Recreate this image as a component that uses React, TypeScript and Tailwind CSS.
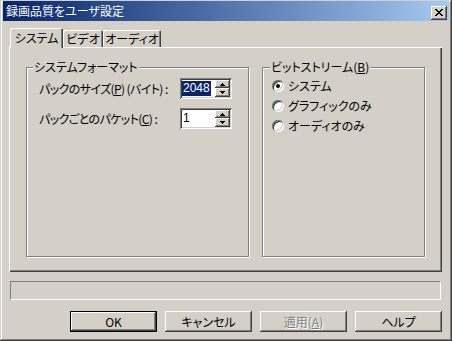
import React from 'react';

const raised =
  'shadow-[inset_-1px_-1px_#404040,inset_1px_1px_#ffffff,inset_-2px_-2px_#808080,inset_2px_2px_#d4d0c8]';
const sunken =
  'shadow-[inset_1px_1px_#808080,inset_-1px_-1px_#ffffff,inset_2px_2px_#404040,inset_-2px_-2px_#d4d0c8]';
const etched = 'border border-[#808080] shadow-[inset_1px_1px_#ffffff,1px_1px_#ffffff]';

function SpinBox({ value, selected }: { value: string; selected?: boolean }) {
  return (
    <div className={`w-[52px] h-[21px] bg-white flex p-[2px] ${sunken}`}>
      <div className="flex-1 flex items-center pl-0">
        <span
          className={`leading-[15px] h-[15px] text-[12px] font-['Liberation_Sans',sans-serif] px-[1px] ${
            selected ? 'bg-[#0a246a] text-white' : 'text-black'
          }`}
        >
          {value}
        </span>
      </div>
      <div className="w-[15px] flex flex-col">
        <div className={`h-[8px] bg-[#d4d0c8] flex items-center justify-center ${raised}`}>
          <svg width="5" height="3" viewBox="0 0 5 3">
            <path d="M2 0h1v1h1v1h1v1H0V2h1V1h1z" fill="#000" />
          </svg>
        </div>
        <div className={`h-[9px] bg-[#d4d0c8] flex items-center justify-center ${raised}`}>
          <svg width="5" height="3" viewBox="0 0 5 3">
            <path d="M0 0h5v1H4v1H3v1H2V2H1V1H0z" fill="#000" />
          </svg>
        </div>
      </div>
    </div>
  );
}

function Radio({ checked, label }: { checked?: boolean; label: string }) {
  return (
    <div className="h-[20px] flex items-center">
      <div className="w-[12px] h-[12px] rounded-full bg-white flex items-center justify-center shadow-[inset_1px_1px_#808080,inset_-1px_-1px_#ffffff,inset_2px_2px_#404040,inset_-2px_-2px_#d4d0c8]">
        {checked && <div className="w-[4px] h-[4px] rounded-full bg-black" />}
      </div>
      <span className="ml-[4px] leading-[14px]">{label}</span>
    </div>
  );
}

function Button({ children, isDefault, disabled }: { children: React.ReactNode; isDefault?: boolean; disabled?: boolean }) {
  return (
    <div
      className={`w-[87px] h-[21px] bg-[#d4d0c8] flex items-center justify-center ${
        isDefault
          ? 'border border-black shadow-[inset_-1px_-1px_#404040,inset_1px_1px_#ffffff,inset_-2px_-2px_#808080]'
          : raised
      }`}
    >
      <span className={disabled ? 'text-[#808080] [text-shadow:1px_1px_#ffffff]' : 'text-black'}>{children}</span>
    </div>
  );
}

export default function App() {
  return (
    <div className="w-[452px] h-[341px] bg-[#d4d0c8] flex flex-col pt-[1px] px-[3px] pb-[3px] text-[12px] text-black font-['Noto_Sans_CJK_JP','Noto_Sans_CJK_SC',sans-serif] [font-feature-settings:'palt'] shadow-[inset_-1px_-1px_#404040,inset_1px_1px_#d4d0c8,inset_-2px_-2px_#808080,inset_2px_2px_#ffffff]">
      {/* タイトルバー */}
      <div className="h-[20px] flex items-center justify-between pl-[3px] pr-[2px] bg-gradient-to-r from-[#0a246a] to-[#a6caf0]">
        <span className="text-white text-[12px] leading-[14px]">録画品質をユーザ設定</span>
        <div className={`w-[16px] h-[14px] bg-[#d4d0c8] flex items-center justify-center mt-[3px] ${raised}`}>
          <svg width="8" height="7" viewBox="0 0 8 7">
            <path
              d="M0 0h2v1h1v1h2V1h1V0h2v1H7v1H6v1H5v1h1v1h1v1h1v1H6V6H5V5H3v1H2v1H0V6h1V5h1V4h1V3H2V2H1V1H0z"
              fill="#000"
            />
          </svg>
        </div>
      </div>

      <div className="flex-1 flex flex-col pl-[6px] pr-[7px]">
        {/* タブ */}
        <div className="mt-[7px] h-[19px] flex items-end">
          <div className="relative z-10 ml-[1px] w-[53px] h-[20px] -mb-[1px] bg-[#d4d0c8] flex items-center justify-center pb-[1px] rounded-t-[2px] shadow-[inset_1px_1px_#ffffff,inset_-1px_0_#404040,inset_-2px_0_#808080]">
            システム
          </div>
          <div className="w-[40px] h-[17px] flex items-center justify-center rounded-t-[2px] shadow-[inset_1px_1px_#ffffff,inset_-1px_0_#404040,inset_-2px_0_#808080]">
            ビデオ
          </div>
          <div className="w-[58px] h-[17px] flex items-center justify-center rounded-t-[2px] shadow-[inset_1px_1px_#ffffff,inset_-1px_0_#404040,inset_-2px_0_#808080]">
            オーディオ
          </div>
        </div>

        {/* タブページ */}
        <div className="h-[225px] flex gap-[13px] pl-[17px] pt-[20px] shadow-[inset_1px_1px_#ffffff,inset_-1px_-1px_#404040,inset_-2px_-2px_#808080]">
          <div className={`relative w-[223px] h-[190px] ${etched}`}>
            <span className="absolute left-[6px] -top-[8px] px-[1px] bg-[#d4d0c8] leading-[14px]">
              システムフォーマット
            </span>
            <div className="pt-[10px] pl-[12px] flex flex-col gap-[9px]">
              <div className="flex items-center">
                <span className="w-[141px] leading-[14px] tracking-[-0.6px]">
                  パックのサイズ(<u>P</u>) (バイト) :
                </span>
                <SpinBox value="2048" selected />
              </div>
              <div className="flex items-center">
                <span className="w-[141px] leading-[14px] tracking-[-0.6px]">
                  パックごとのパケット(<u>C</u>) :
                </span>
                <SpinBox value="1" />
              </div>
            </div>
          </div>

          <div className={`relative w-[163px] h-[190px] ${etched}`}>
            <span className="absolute left-[7px] -top-[8px] px-[1px] bg-[#d4d0c8] leading-[14px]">
              ビットストリーム(<u>B</u>)
            </span>
            <div className="pt-[8px] pl-[9px] flex flex-col">
              <Radio checked label="システム" />
              <Radio label="グラフィックのみ" />
              <Radio label="オーディオのみ" />
            </div>
          </div>
        </div>

        {/* ステータス */}
        <div className="mt-[9px] mx-[1px] h-[19px] border border-t-[#808080] border-l-[#808080] border-b-white border-r-white" />

        {/* ボタン */}
        <div className="mt-[11px] flex justify-end gap-[8px]">
          <Button isDefault>OK</Button>
          <Button>キャンセル</Button>
          <Button disabled>
            適用(<u>A</u>)
          </Button>
          <Button>ヘルプ</Button>
        </div>
      </div>
    </div>
  );
}
